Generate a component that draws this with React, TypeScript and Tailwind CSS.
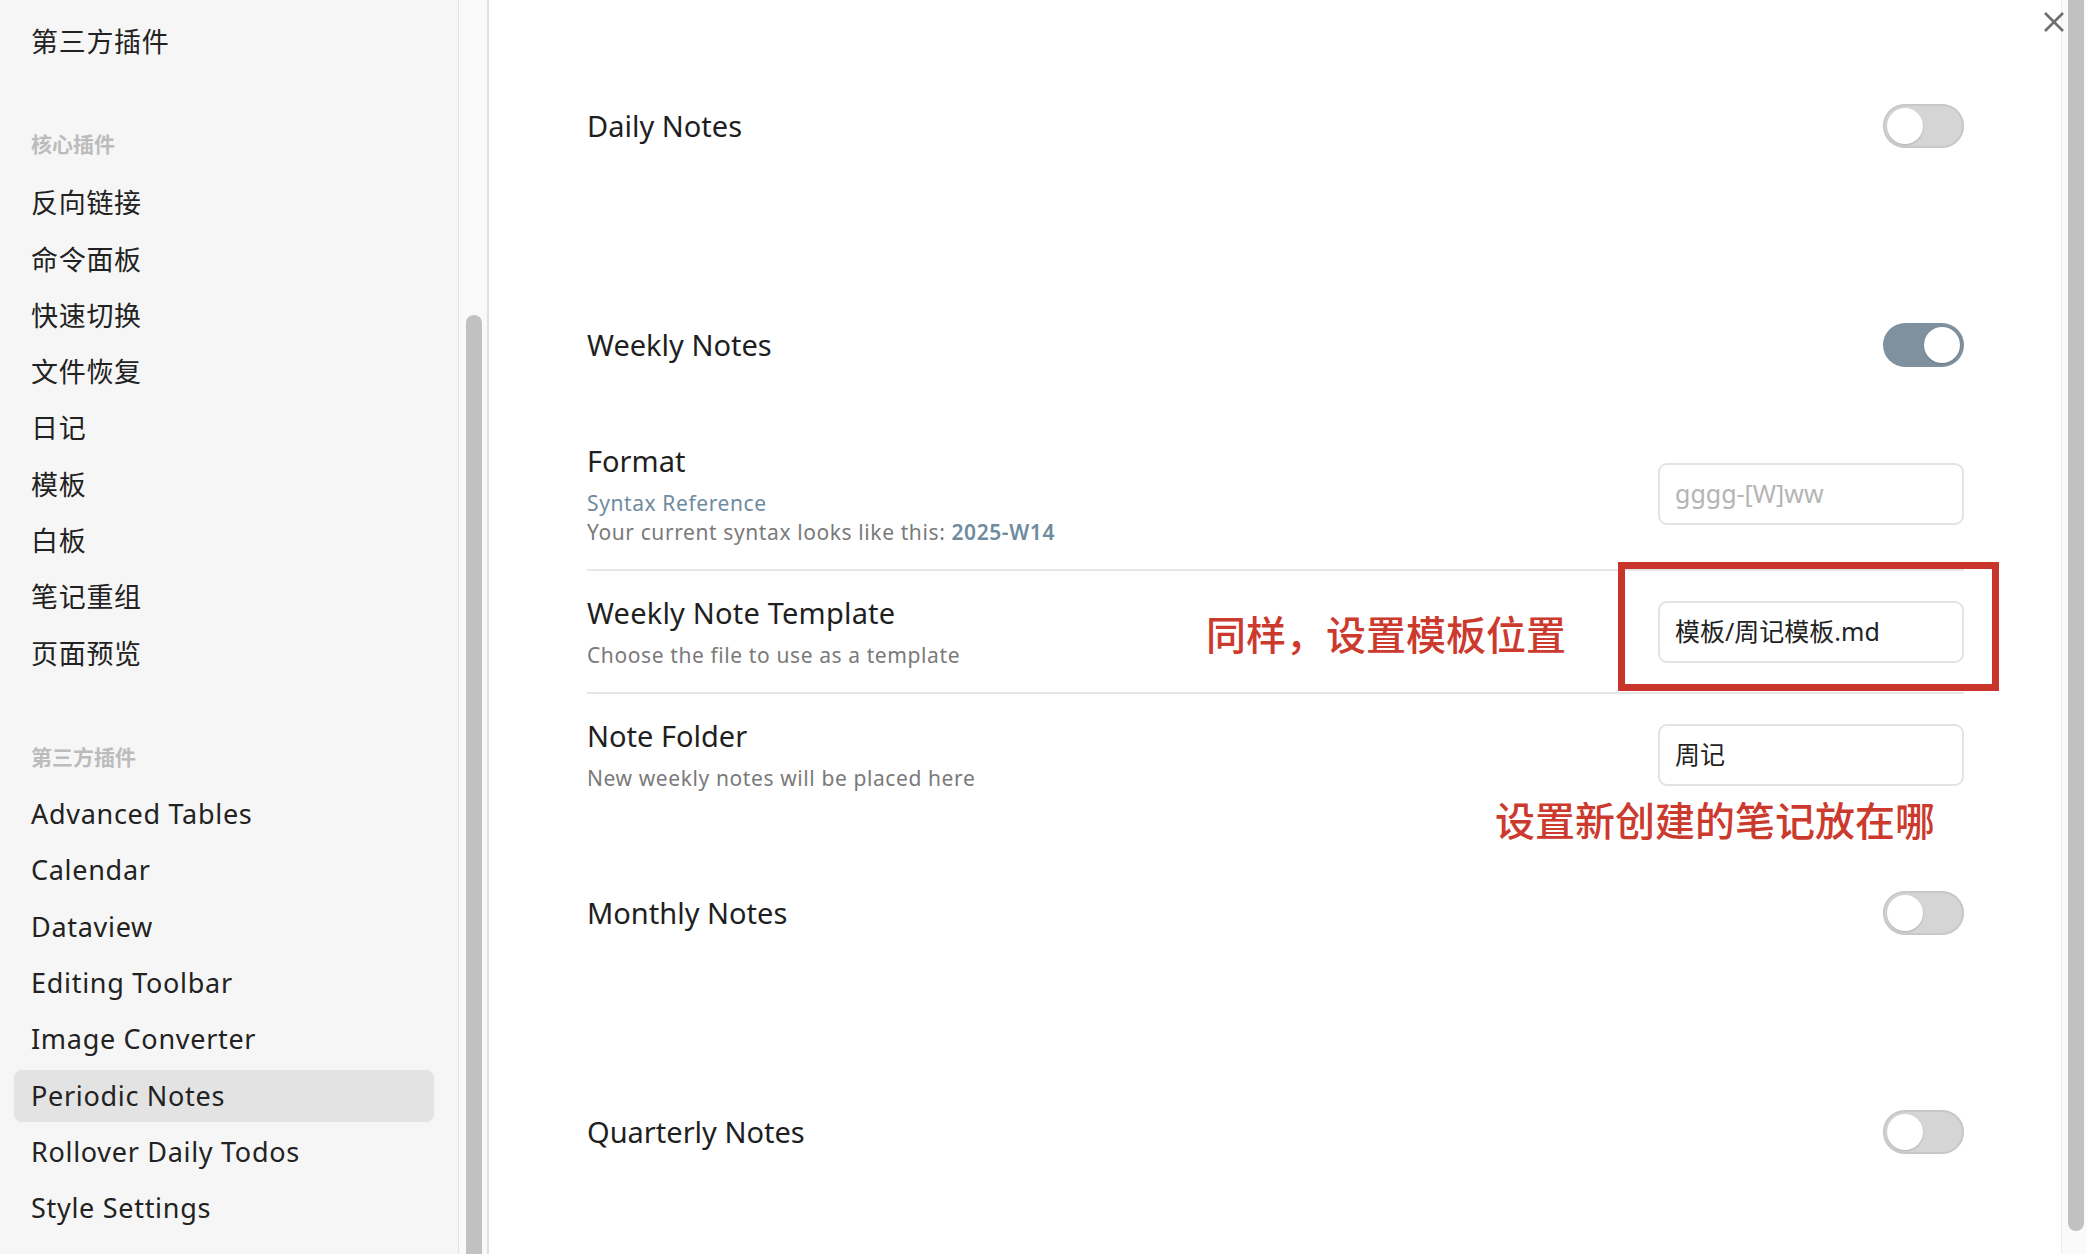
import React from 'react';

const corePlugins = ['反向链接', '命令面板', '快速切换', '文件恢复', '日记', '模板', '白板', '笔记重组', '页面预览'];
const communityPlugins = [
  'Advanced Tables',
  'Calendar',
  'Dataview',
  'Editing Toolbar',
  'Image Converter',
  'Periodic Notes',
  'Rollover Daily Todos',
  'Style Settings',
];

function NavItem({ label, active }: { label: string; active?: boolean }) {
  return (
    <div
      className={`h-[52px] mb-[4.3px] rounded-[8px] pl-[17px] flex items-center text-[27px] tracking-[0.7px] text-[#222] ${
        active ? 'bg-[#e3e3e3]' : ''
      }`}
    >
      {label}
    </div>
  );
}

function NavHeader({ label, className = '' }: { label: string; className?: string }) {
  return (
    <div className={`h-[30px] pl-[17px] flex items-center text-[21px] font-bold text-[#bcbcbc] ${className}`}>
      {label}
    </div>
  );
}

function Toggle({ on }: { on?: boolean }) {
  return (
    <div
      className={`w-[81px] h-[44px] rounded-full p-[4px] flex shrink-0 ${
        on ? 'bg-[#7f919e] justify-end' : 'bg-[#d5d5d5] shadow-[inset_0_0_0_2px_#c8c8c8]'
      }`}
    >
      <div className="w-[36px] h-[36px] rounded-full bg-white shadow-[0_1px_2px_rgba(0,0,0,0.18)]" />
    </div>
  );
}

function HeadingRow({ title, on, className = '' }: { title: string; on?: boolean; className?: string }) {
  return (
    <div className={`flex items-center justify-between h-[44px] ${className}`}>
      <div className="text-[29px] text-[#1f1f1f]">{title}</div>
      <Toggle on={on} />
    </div>
  );
}

function TextInput({ value, placeholder }: { value?: string; placeholder?: string }) {
  return (
    <div className="w-[306px] h-[62px] shrink-0 rounded-[9px] border-2 border-[#e3e3e3] bg-white px-[15px] flex items-center text-[25px]">
      {value ? <span className="text-[#222]">{value}</span> : <span className="text-[#b4b4b4]">{placeholder}</span>}
    </div>
  );
}

export default function App() {
  return (
    <div className="relative flex w-[2086px] h-[1254px] overflow-hidden bg-white font-['Noto_Sans','Noto_Sans_CJK_SC',sans-serif]">
      {/* Sidebar */}
      <div className="w-[459px] shrink-0 bg-[#f6f6f6] border-r border-[#e3e3e3] pt-[16px] pl-[14px] pr-[24px]">
        <NavItem label="第三方插件" />
        <NavHeader label="核心插件" className="mt-[62px] mb-[17.5px]" />
        {corePlugins.map((p) => (
          <NavItem key={p} label={p} />
        ))}
        <NavHeader label="第三方插件" className="mt-[63px] mb-[15.5px]" />
        {communityPlugins.map((p) => (
          <NavItem key={p} label={p} active={p === 'Periodic Notes'} />
        ))}
      </div>

      {/* Sidebar scrollbar */}
      <div className="w-[30px] shrink-0 bg-[#f9f9f9] border-r-2 border-[#e0e0e0] pt-[315px] pl-[7px] pr-[5px] flex flex-col">
        <div className="flex-1 rounded-t-full bg-[#c1c1c1]" />
      </div>

      {/* Main settings */}
      <div className="flex-1 pt-[104px] pl-[98px] pr-[97px]">
        <HeadingRow title="Daily Notes" />
        <HeadingRow title="Weekly Notes" on className="mt-[175px]" />

        <div className="mt-[52px] pt-[22px] pb-[22px] border-b-2 border-[#e6e6e6] flex items-center justify-between">
          <div>
            <div className="text-[29px] leading-[40px] text-[#1f1f1f]">Format</div>
            <div className="mt-[8px] text-[21px] leading-[29px] tracking-[0.6px] text-[#6f8ba0]">Syntax Reference</div>
            <div className="text-[21px] leading-[29px] tracking-[0.6px] text-[#7a7a7a]">
              Your current syntax looks like this: <span className="font-semibold text-[#6f8ba0]">2025-W14</span>
            </div>
          </div>
          <TextInput placeholder="gggg-[W]ww" />
        </div>

        <div className="relative pt-[22px] pb-[22px] border-b-2 border-[#e6e6e6] flex items-center justify-between">
          <div>
            <div className="text-[29px] leading-[40px] tracking-[0.2px] text-[#1f1f1f]">Weekly Note Template</div>
            <div className="mt-[8px] text-[21px] leading-[29px] tracking-[0.6px] text-[#7a7a7a]">
              Choose the file to use as a template
            </div>
          </div>
          <TextInput value="模板/周记模板.md" />
          <div className="absolute left-[619px] top-[42px] text-[40px] leading-[40px] font-medium text-[#cc3a2e] font-['Noto_Sans_CJK_SC',sans-serif]">
            同样，设置模板位置
          </div>
          <div className="absolute left-[1031px] top-[-9px] w-[381px] h-[129px] border-[7px] border-[#c9352a]" />
        </div>

        <div className="relative pt-[22px] pb-[22px] flex items-center justify-between">
          <div>
            <div className="text-[29px] leading-[40px] text-[#1f1f1f]">Note Folder</div>
            <div className="mt-[8px] text-[21px] leading-[29px] tracking-[0.6px] text-[#7a7a7a]">
              New weekly notes will be placed here
            </div>
          </div>
          <TextInput value="周记" />
          <div className="absolute left-[908px] top-[105px] text-[40px] leading-[40px] font-medium text-[#cc3a2e] font-['Noto_Sans_CJK_SC',sans-serif]">
            设置新创建的笔记放在哪
          </div>
        </div>

        <HeadingRow title="Monthly Notes" className="mt-[76px]" />
        <HeadingRow title="Quarterly Notes" className="mt-[175px]" />
      </div>

      {/* Main scrollbar */}
      <div className="w-[25px] shrink-0 bg-[#fafafa] border-l border-[#ebebeb] pl-[6px] pr-[2px] pb-[23px] flex flex-col">
        <div className="flex-1 rounded-b-full bg-[#c1c1c1]" />
      </div>

      {/* Close button */}
      <svg
        className="absolute left-[2043px] top-[11px] w-[22px] h-[22px]"
        viewBox="0 0 22 22"
        fill="none"
        stroke="#6f6f6f"
        strokeWidth="2.6"
        strokeLinecap="butt"
      >
        <path d="M2 2 L20 20 M20 2 L2 20" />
      </svg>
    </div>
  );
}
